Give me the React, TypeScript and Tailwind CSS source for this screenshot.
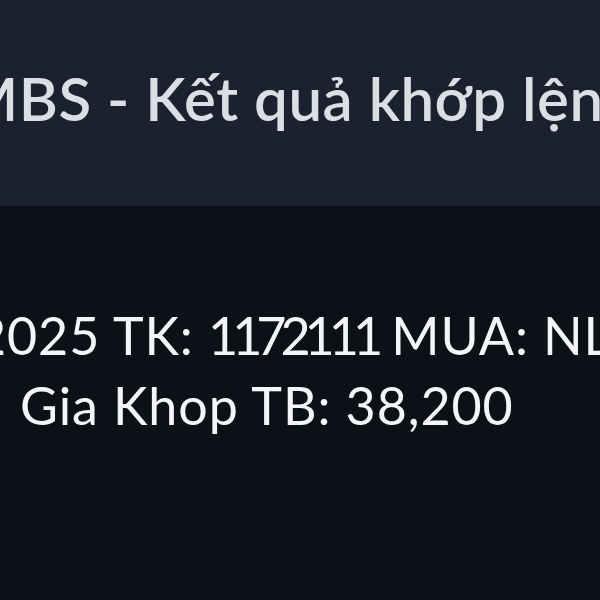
export default function App() {
  return (
    <div
      className="flex h-[600px] w-[600px] flex-col overflow-hidden bg-[#0d1117]"
      style={{ fontFamily: "Lato, 'Noto Sans', sans-serif" }}
    >
      {/* Notification header */}
      <header className="h-[206px] shrink-0 overflow-hidden bg-[#1c2130] pt-[62px]">
        <h1 className="-ml-[38px] whitespace-nowrap text-[60px] font-semibold leading-[72px] tracking-[0.5px] text-[#dadee5]">
          MBS - Kết quả khớp lệnh
        </h1>
      </header>

      {/* Message body */}
      <main className="flex flex-col overflow-hidden pt-[94px] text-[52px] leading-[70px] tracking-[0.9px] text-[#f4f5f6]">
        <p className="-ml-[24px] whitespace-nowrap">
          2025 TK: <span className="tracking-[-6px]">1172111</span> MUA: NLG
        </p>
        <p className="ml-[20px] whitespace-nowrap">Gia Khop TB: 38,200</p>
      </main>
    </div>
  );
}
